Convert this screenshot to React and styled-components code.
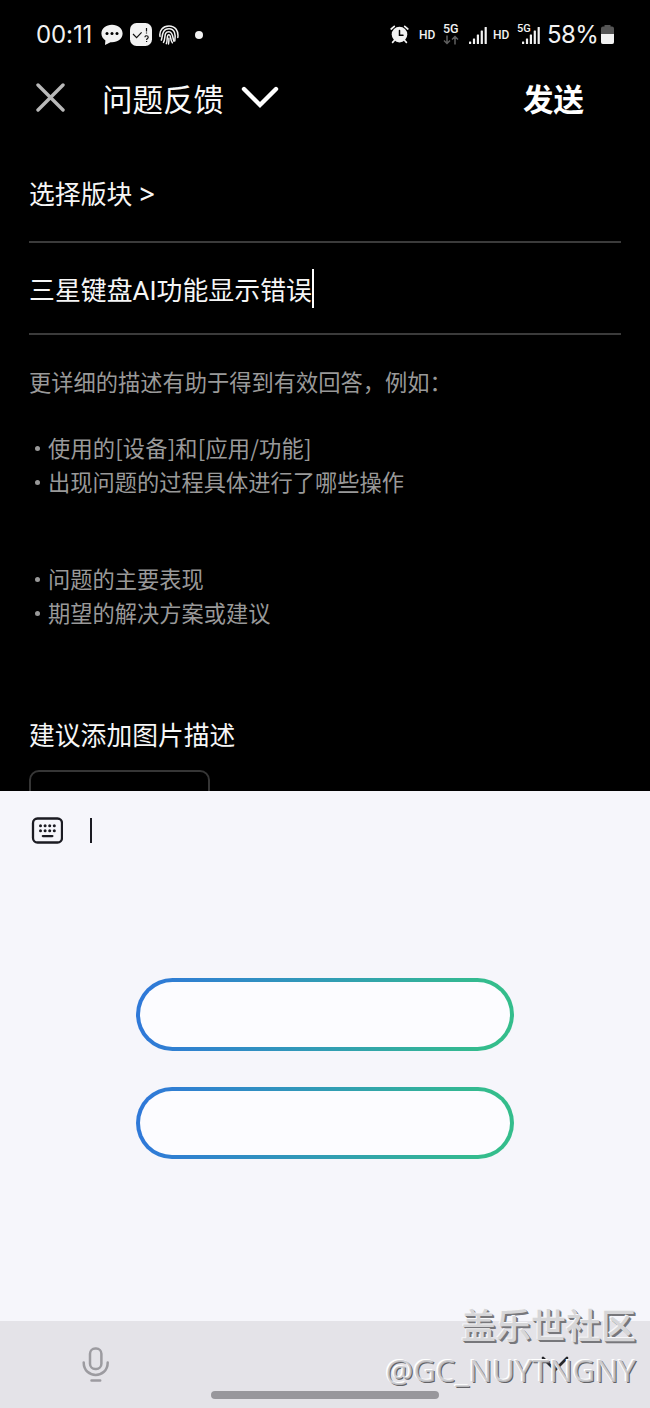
import { useId } from 'react'
import styled, { createGlobalStyle } from 'styled-components'

const GlobalStyle = createGlobalStyle`
  * {
    box-sizing: border-box;
  }

  body {
    margin: 0;
    background: #000;
    font-family: Roboto, "Noto Sans CJK SC", sans-serif;
  }

  svg {
    display: block;
    flex: none;
  }
`

const Screen = styled.div`
  position: relative;
  width: 650px;
  height: 1408px;
  overflow: hidden;
  display: flex;
  flex-direction: column;
  background: #000;
`

const StatusBar = styled.div`
  flex: none;
  height: 69px;
  padding: 0 36px;
  display: flex;
  justify-content: space-between;
  align-items: center;
  color: #f2f2f2;
`

const StatusGroup = styled.div`
  display: flex;
  align-items: center;
`

const Clock = styled.span`
  width: 65px;
  font-family: Inter, sans-serif;
  font-size: 24px;
  letter-spacing: -0.1px;
  line-height: 30px;
  white-space: nowrap;
`

const Hd = styled.span`
  width: ${props => props.$width}px;
  font-size: 12px;
  font-weight: 500;
  line-height: 16px;
`

const Battery = styled.span`
  width: 54px;
  font-family: Inter, sans-serif;
  font-size: 24px;
  letter-spacing: -0.6px;
  line-height: 30px;
  white-space: nowrap;
`

const Network = styled.div`
  width: ${props => props.$width}px;
  height: 24px;
  display: flex;
  flex-direction: column;
  font-size: ${props => props.$size}px;
  font-weight: 500;
  line-height: 12px;
`

const TopBar = styled.header`
  flex: none;
  height: 62px;
  padding: 6px 66px 0 36px;
  display: flex;
  align-items: flex-start;
`

const TopTitle = styled.h1`
  margin: 4px 17px 0 37px;
  color: #fafafa;
  font-size: 30.5px;
  font-weight: 400;
  line-height: 44px;
`

const SendButton = styled.button`
  margin: 4px 0 0 auto;
  padding: 0;
  border: 0;
  background: none;
  color: #fff;
  font-family: inherit;
  font-size: 30.5px;
  font-weight: 700;
  line-height: 44px;
`

const Form = styled.main`
  flex: none;
  height: 660px;
  padding: 0 29px;
  overflow: hidden;
`

const Field = styled.div`
  height: ${props => props.$height}px;
  padding-top: ${props => props.$top}px;
  border-bottom: 2px solid #3b3b3b;
  display: flex;
  align-items: flex-start;
  color: #f6f6f6;
  font-size: 25.85px;
  line-height: 38px;
  white-space: pre;
`

const FieldText = styled.span`
  padding-top: 3px;
  letter-spacing: 0.05px;
`

const Arrow = styled.span`
  margin-left: 7px;
  font-family: "Noto Sans", sans-serif;
  font-size: 27px;
  font-weight: 500;
  line-height: 36px;
`

const Caret = styled.span`
  width: 2px;
  height: ${props => props.$height}px;
  background: ${props => props.$color};
`

const Hint = styled.div`
  padding-top: 29px;
  color: #999;
  font-family: "Noto Sans CJK SC", sans-serif;
  font-size: 22.25px;
  line-height: 34px;
`

const HintLine = styled.p`
  margin: 0 0 ${props => props.$gap || 0}px;
  letter-spacing: ${props => props.$spacing || 0}px;
  white-space: pre;
`

const BulletLine = styled(HintLine)`
  display: flex;
  align-items: center;
  padding-left: 6px;

  &::before {
    content: '';
    width: 5px;
    height: 5px;
    margin: 3px 8px 0 0;
    border-radius: 50%;
    background: #999;
  }
`

const SectionTitle = styled.h2`
  margin: 88px 0 0;
  color: #f6f6f6;
  font-size: 25.8px;
  font-weight: 400;
  line-height: 38px;
`

const ImageBox = styled.div`
  width: 181px;
  height: 181px;
  margin-top: 15px;
  border: 2px solid #363636;
  border-radius: 10px;
`

const Keyboard = styled.section`
  flex: 1;
  display: flex;
  flex-direction: column;
  background: #f6f6fb;
`

const Toolbar = styled.div`
  height: 80px;
  padding: 0 0 2px 31px;
  display: flex;
  align-items: center;
  gap: 27px;
`

const Suggestions = styled.div`
  flex: 1;
  padding-top: 107px;
  display: flex;
  flex-direction: column;
  align-items: center;
  gap: 36px;
`

const Pill = styled.div`
  width: 378px;
  height: 72.5px;
  border: 4px solid transparent;
  border-radius: 37px;
  background:
    linear-gradient(#fcfcff, #fcfcff) padding-box,
    linear-gradient(95deg, #2f79d8 3%, #319eb3 52%, #34bd8c 93%) border-box;
`

const BottomBar = styled.footer`
  flex: none;
  height: 87px;
  display: grid;
  grid-template-columns: 191px 268px 191px;
  background: #e4e3e8;
`

const BottomCell = styled.div`
  display: flex;
  justify-content: center;
  align-items: ${props => props.$end ? 'flex-end' : 'center'};
  padding-bottom: ${props => props.$end ? 9 : 0}px;
`

const HomeHandle = styled.div`
  width: 228px;
  height: 8px;
  border-radius: 4px;
  background: #98979c;
`

const Watermark = styled.div`
  position: absolute;
  right: 14px;
  bottom: 17px;
  display: flex;
  flex-direction: column;
  align-items: flex-end;
  white-space: nowrap;
`

const WatermarkName = styled.div`
  margin-bottom: 3px;
  color: #d6d6d8;
  font-family: "Noto Sans CJK SC", sans-serif;
  font-size: 35px;
  font-weight: 500;
  line-height: 44px;
  text-shadow: -1px -1px 0 #f7f7f9, 1px 1px 0 #77777b, 2px 2px 0 #77777b;
`

const WatermarkUser = styled.div`
  color: #c4c4c8dd;
  font-family: "Open Sans", sans-serif;
  font-size: 31px;
  line-height: 42px;
  text-shadow: -1.5px -1px 0 #fff, 1px 1px 0 #626266;
`

const ChatIcon = () => (
  <svg width="22" height="22" viewBox="0 0 22 22">
    <path d="M11 .800C5 .800 .4 4.600 .4 9.600c0 3 1.600 5.300 4 6.800L4 21l5.500-2.800 1.500.1c6 0 10.600-3.700 10.600-8.700S17 .800 11 .800z" fill="#f2f2f2" />
    <circle cx="6" cy="9.500" r="1.500" />
    <circle cx="11" cy="9.500" r="1.500" />
    <circle cx="16" cy="9.500" r="1.500" />
  </svg>
)

const CheckIcon = () => (
  <svg width="22" height="23" viewBox="0 0 22 23">
    <rect width="22" height="23" rx="6.500" fill="#f2f2f2" />
    <path d="M3 11l3.600 3.600 5-5.200M16.500 5v3.400M16.500 9.600v1M15 14.200c0-2 3.200-1.900 3.200 0 0 1.300-1.600 1.300-1.600 2.700M16.600 18v1" fill="none" stroke="#111" strokeWidth="1.200" />
  </svg>
)

const FingerprintIcon = () => (
  <svg width="20" height="20" viewBox="0 0 20 20" fill="none" stroke="#f2f2f2" strokeWidth="1.500" strokeLinecap="round">
    <path d="M1 11.500C0 5.500 4 .9 10 .9c6.300 0 9.800 5.200 8.800 11.600" />
    <path d="M2.300 15.200C3.700 12.600 2.200 3.800 10 3.800c5.500 0 7 5.400 5.800 12" />
    <path d="M4.500 17.400C7 13.500 4.300 6.700 9.900 6.700c4.300 0 3.600 6.300 5 9.600" />
    <path d="M7.300 18.700C9 15.500 7.200 9.800 9.800 9.800c2.500 0 1 4.700 3.600 8" />
    <path d="M9.900 13.300c.1 2 .1 3.600-.4 5.600" />
  </svg>
)

const AlarmIcon = () => (
  <svg width="19" height="19" viewBox="0 0 19 19" fill="none" strokeLinecap="round">
    <path d="M1.200 4L4.300 1.400M17.800 4L14.700 1.400M4.300 15.500L2.600 17.300M14.700 15.500l1.700 1.800" stroke="#f2f2f2" strokeWidth="1.700" />
    <circle cx="9.500" cy="9.600" r="7.800" fill="#f2f2f2" />
    <path d="M9.500 5.500v4.700h3.500" stroke="#000" strokeWidth="1.500" />
  </svg>
)

const DataArrows = () => (
  <svg width="16" height="10" viewBox="0 0 16 10" fill="none" stroke="#5f5f5f" strokeWidth="1.500">
    <path d="M4 .500v8M1 5.500l3 3 3-3M12 9.500v-8M9 4.500l3-3 3 3" />
  </svg>
)

const signalBars = [2.500, 5.500, 9.500, 13.500, 17]

const Signal = () => (
  <svg width="18" height="17" viewBox="0 0 18 17" fill="#f2f2f2">
    {signalBars.map((height, i) => (
      <rect key={height} x={i * 3.900} y={17 - height} width="2.200" height={height} rx=".5" />
    ))}
  </svg>
)

const SignalSlot = styled.div`
  width: ${props => props.$width}px;
  padding-top: 2px;
  margin-left: ${props => props.$shift || 0}px;
`

const IconSlot = styled.div`
  width: ${props => props.$width}px;
`

const BatteryIcon = () => {
  const id = useId()

  return (
    <svg width="13" height="19" viewBox="0 0 13 19">
      <clipPath id={id}>
        <path d="M3.500 0h6v1.500H11a2 2 0 0 1 2 2V17a2 2 0 0 1-2 2H2a2 2 0 0 1-2-2V3.500a2 2 0 0 1 2-2h1.500z" />
      </clipPath>
      <g clipPath={`url(#${id})`}>
        <rect width="13" height="19" fill="#555" />
        <rect y="9" width="13" height="10" fill="#f2f2f2" />
      </g>
    </svg>
  )
}

const CloseIcon = () => (
  <svg width="29" height="46" viewBox="0 0 29 46" stroke="#b9b9b9" strokeWidth="3.400" strokeLinecap="round">
    <path d="M2 10l25 25M27 10L2 35" />
  </svg>
)

const ChevronIcon = () => (
  <svg width="38" height="46" viewBox="0 0 38 46" fill="none" stroke="#fff" strokeWidth="4.400" strokeLinecap="round">
    <path d="M3 14l16 16L35 14" />
  </svg>
)

const keyDots = [9.500, 14.100, 18.700, 23.300]

const KeyboardIcon = () => (
  <svg width="32" height="27" viewBox="0 0 32 27" fill="#1b1b22">
    <rect x="2" y="1.500" width="29" height="24" rx="4.500" fill="none" stroke="#1b1b22" strokeWidth="2.300" />
    {keyDots.map(x => <circle key={x} cx={x} cy="8.800" r="1.500" />)}
    {keyDots.map(x => <circle key={x} cx={x} cy="13.700" r="1.500" />)}
    <rect x="10.700" y="18" width="11.800" height="2.200" rx="1.100" />
  </svg>
)

const MicIcon = () => (
  <svg width="28" height="36" viewBox="0 0 28 36" fill="none" stroke="#9c9ba0" strokeWidth="2.500" strokeLinecap="round">
    <rect x="8" y="1.500" width="11.400" height="20.500" rx="5.200" />
    <path d="M1.700 15.500C1.700 32 25.700 32 25.700 15.500M9.500 33.500h8.700" />
  </svg>
)

const HideIcon = () => (
  <svg width="28" height="18" viewBox="0 0 28 18" fill="none" stroke="#26262a" strokeWidth="2.700" strokeLinecap="round">
    <path d="M2 2l12 12L26 2" />
  </svg>
)

const Dot = styled.span`
  width: 8px;
  height: 8px;
  border-radius: 50%;
  background: #f2f2f2;
`

function App() {
  return (
    <Screen>
      <GlobalStyle />

      <StatusBar>
        <StatusGroup>
          <Clock>00:11</Clock>
          <IconSlot $width={29}><ChatIcon /></IconSlot>
          <IconSlot $width={29}><CheckIcon /></IconSlot>
          <IconSlot $width={36}><FingerprintIcon /></IconSlot>
          <Dot />
        </StatusGroup>
        <StatusGroup>
          <IconSlot $width={29}><AlarmIcon /></IconSlot>
          <Hd $width={24}>HD</Hd>
          <Network $width={26} $size={12.5}>5G<DataArrows /></Network>
          <SignalSlot $width={24}><Signal /></SignalSlot>
          <Hd $width={24}>HD</Hd>
          <Network $width={16} $size={11}>5G</Network>
          <SignalSlot $width={25} $shift={-11}><Signal /></SignalSlot>
          <Battery>58%</Battery>
          <BatteryIcon />
        </StatusGroup>
      </StatusBar>

      <TopBar>
        <CloseIcon />
        <TopTitle>问题反馈</TopTitle>
        <ChevronIcon />
        <SendButton>发送</SendButton>
      </TopBar>

      <Form>
        <Field $height={112} $top={45}>选择版块<Arrow>&gt;</Arrow></Field>
        <Field $height={92} $top={26}>
          <FieldText>三星键盘AI功能显示错误</FieldText>
          <Caret $height={39} $color="#fff" />
        </Field>
        <Hint>
          <HintLine $gap={32}>更详细的描述有助于得到有效回答，例如：</HintLine>
          <BulletLine $spacing={0.15}>使用的[设备]和[应用/功能]</BulletLine>
          <BulletLine $gap={63}>出现问题的过程具体进行了哪些操作</BulletLine>
          <BulletLine>问题的主要表现</BulletLine>
          <BulletLine>期望的解决方案或建议</BulletLine>
        </Hint>
        <SectionTitle>建议添加图片描述</SectionTitle>
        <ImageBox />
      </Form>

      <Keyboard>
        <Toolbar>
          <KeyboardIcon />
          <Caret $height={25} $color="#1b1b22" />
        </Toolbar>
        <Suggestions>
          <Pill />
          <Pill />
        </Suggestions>
        <BottomBar>
          <BottomCell><MicIcon /></BottomCell>
          <BottomCell $end><HomeHandle /></BottomCell>
          <BottomCell><HideIcon /></BottomCell>
        </BottomBar>
      </Keyboard>

      <Watermark>
        <WatermarkName>盖乐世社区</WatermarkName>
        <WatermarkUser>@GC_NUYTNGNY</WatermarkUser>
      </Watermark>
    </Screen>
  )
}

export default App
